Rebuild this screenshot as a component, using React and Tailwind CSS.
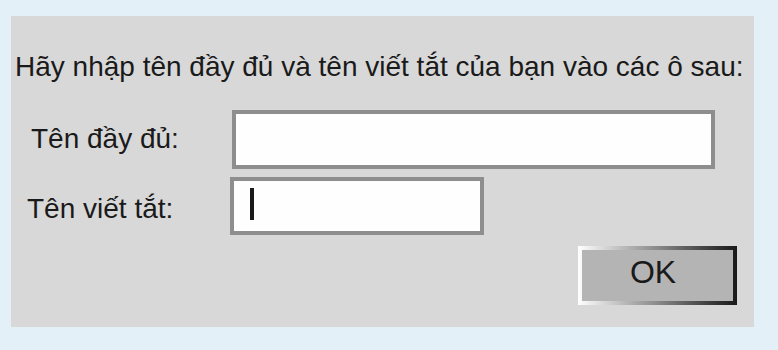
import React from "react";

export default function App() {
  return (
    <div className="w-[778px] h-[350px] bg-[#e3f0f7] pt-[16px] pl-[11px] overflow-hidden" style={{ fontFamily: '"Liberation Sans", Arial, sans-serif' }}>
      {/* dialog panel */}
      <div className="w-[743px] h-[311px] bg-[#d8d8d8] pt-[35px] pl-[4px] text-[#1a1a1a]">
        <p className="text-[28px] leading-[32px] whitespace-nowrap">
          Hãy nhập tên đầy đủ và tên viết tắt của bạn vào các ô sau:
        </p>

        {/* full name row */}
        <div className="flex items-start mt-[27px] h-[59px]">
          <label className="ml-[16px] w-[201px] mt-[13px] text-[28px] leading-[32px] whitespace-nowrap">Tên đầy đủ:</label>
          <div className="w-[483px] h-[59px] border-4 border-[#8e8e8e] bg-[#fefefe]"></div>
        </div>

        {/* short name row */}
        <div className="flex items-start mt-[8px] h-[58px]">
          <label className="ml-[12px] w-[203px] mt-[16px] text-[28px] leading-[32px] whitespace-nowrap">Tên viết tắt:</label>
          <div className="w-[254px] h-[58px] border-4 border-[#8e8e8e] bg-[#fefefe] pl-[16px] pt-[7px]">
            <div className="w-[4px] h-[32px] bg-[#1a1a1a]"></div>
          </div>
        </div>

        {/* OK button */}
        <div className="flex justify-end mt-[11px] pr-[17px]">
          <button className="w-[159px] h-[59px] p-[4px] bg-linear-to-r from-white via-[#8a8a8a] to-[#1a1a1a]">
            <div className="w-full h-full bg-[#b4b4b4] flex justify-center items-start pt-[4px] pr-[9px] text-[32px] leading-[36px]">
              OK
            </div>
          </button>
        </div>
      </div>
    </div>
  );
}
